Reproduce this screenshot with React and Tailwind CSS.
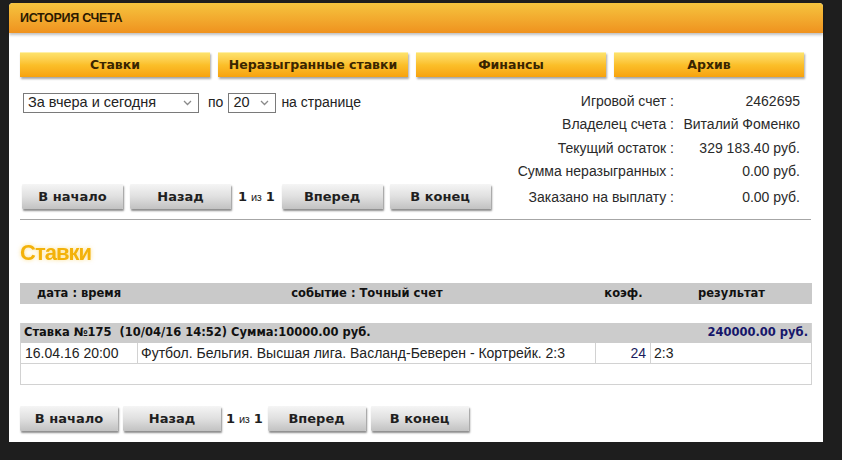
import React from 'react';

const bold = "font-['DejaVu_Sans',sans-serif] font-bold";
const regular = "font-['Liberation_Sans',Arial,sans-serif]";

const tabs = ['Ставки', 'Неразыгранные ставки', 'Финансы', 'Архив'];

const info = [
  ['Игровой счет :', '2462695'],
  ['Владелец счета :', 'Виталий Фоменко'],
  ['Текущий остаток :', '329 183.40 руб.'],
  ['Сумма неразыгранных :', '0.00 руб.'],
  ['Заказано на выплату :', '0.00 руб.'],
];

function GrayButton({ label, wide }) {
  return (
    <button
      className={`${bold} ${wide ? 'w-[101px]' : 'w-[98px]'} h-[25px] text-[13px] text-[#1f1f1f] bg-gradient-to-b from-[#f5f5f5] via-[#e0e0e0] to-[#c2c2c2] shadow-[1px_2px_2px_rgba(0,0,0,0.45)] rounded-[1px]`}
    >
      {label}
    </button>
  );
}

// pager used above and below the table, spacing differs a bit
function Pager({ wide }) {
  return (
    <div className={`flex items-center ${wide ? 'gap-[7px]' : 'gap-[5px]'}`}>
      <GrayButton label="В начало" wide={wide} />
      <GrayButton label="Назад" wide={wide} />
      <span className={`${bold} text-[13px] text-[#1f1f1f] tracking-[-0.3px]`}>
        1 <span className={`${regular} font-normal text-[11px]`}>из</span> 1
      </span>
      <GrayButton label="Вперед" wide={wide} />
      <GrayButton label="В конец" wide={wide} />
    </div>
  );
}

function Select({ value, width }) {
  return (
    <div className={`${width} h-[20px] border border-[#7a7a7a] bg-white flex items-center justify-between pl-[4px] pr-[6px]`}>
      <span className={`${regular} text-[14.5px] text-[#222] leading-none`}>{value}</span>
      <svg width="9" height="6" viewBox="0 0 9 6">
        <path d="M1 1l3.5 3.5L8 1" fill="none" stroke="#8a8a8a" strokeWidth="1.3" />
      </svg>
    </div>
  );
}

export default function App() {
  return (
    <div className="w-[842px] h-[460px] bg-[#1e1e1e] pt-[3px] pl-[9px] overflow-hidden">
      <div className="w-[814px] h-[439px] bg-white rounded-t-[4px] flex flex-col">
        {/* header bar */}
        <div className="shrink-0 h-[30px] rounded-t-[4px] bg-gradient-to-b from-[#f5c43e] to-[#ef921e] shadow-[0_2px_3px_rgba(0,0,0,0.25)] flex items-center pl-[11px]">
          <span className={`${regular} font-bold text-[12.5px] text-[#2a1900] tracking-[-0.3px]`}>ИСТОРИЯ СЧЕТА</span>
        </div>

        <div className="px-[11px] flex flex-col">
          {/* tabs */}
          <div className="mt-[19px] flex gap-[8px]">
            {tabs.map((t) => (
              <div
                key={t}
                className={`${bold} w-[190px] h-[25px] flex items-center justify-center text-[12.5px] text-[#3a2500] bg-gradient-to-b from-[#fde26a] via-[#fbbf29] to-[#f7a20c] border-t border-[#fff0a8] shadow-[1px_2px_2px_rgba(0,0,0,0.35)]`}
              >
                {t}
              </div>
            ))}
          </div>

          {/* filters + account info */}
          <div className="mt-[13px] flex justify-between">
            <div className="flex flex-col">
              <div className={`${regular} mt-[2px] ml-[3px] flex items-center text-[14px] text-[#222]`}>
                <Select value="За вчера и сегодня" width="w-[176px]" />
                <span className="ml-[9px] mr-[5px]">по</span>
                <Select value="20" width="w-[48px]" />
                <span className="ml-[5px]">на странице</span>
              </div>
              <div className="mt-[71px] ml-[2px]">
                <Pager wide />
              </div>
            </div>

            <div className={`${regular} mr-[12px] grid grid-cols-[auto_118px] gap-x-[8px] text-[14px] text-[#2a2a2a] text-right whitespace-nowrap`}>
              {info.map(([k, v], i) => (
                <React.Fragment key={k}>
                  <div className={`leading-[23px] ${i === 4 ? 'pt-[2px]' : ''}`}>{k}</div>
                  <div className={`leading-[23px] ${i === 4 ? 'pt-[2px]' : ''}`}>{v}</div>
                </React.Fragment>
              ))}
            </div>
          </div>

          <div className="mt-[10px] mr-[1px] border-t border-[#a6a6a6]" />

          <h2 className={`${regular} font-bold mt-[20px] text-[22px] leading-[26px] text-[#f3b20a] tracking-[-1px] drop-shadow-[0_0_2px_rgba(250,200,60,0.6)]`}>
            Ставки
          </h2>

          {/* column headings */}
          <div className={`${bold} mt-[17px] h-[21px] bg-[#c9c9c9] grid grid-cols-[118px_458px_55px_161px] items-center text-center text-[11.5px] text-[#111]`}>
            <div>дата : время</div>
            <div>событие : Точный счет</div>
            <div>коэф.</div>
            <div>результат</div>
          </div>

          {/* bet */}
          <div className="mt-[19px] border-x border-b border-[#d2d2d2]">
            <div className={`${bold} h-[20px] bg-[#cccccc] flex items-center justify-between pl-[3px] pr-[3px] text-[11.5px] text-[#111]`}>
              <span>Ставка №175&nbsp;&nbsp;(10/04/16 14:52) Сумма:10000.00 руб.</span>
              <span className="text-[#16166a]">240000.00 руб.</span>
            </div>
            <div className={`${regular} h-[21px] grid grid-cols-[117px_458px_55px_160px] text-[14px] text-[#222] border-b border-[#d2d2d2]`}>
              <div className="pl-[4px] flex items-center border-r border-[#d2d2d2]">16.04.16 20:00</div>
              <div className="pl-[3px] flex items-center border-r border-[#d2d2d2]">Футбол. Бельгия. Высшая лига. Васланд-Беверен - Кортрейк. 2:3</div>
              <div className="pr-[4px] flex items-center justify-end text-[#1c1c5e] border-r border-[#d2d2d2]">24</div>
              <div className="pl-[3px] flex items-center">2:3</div>
            </div>
            <div className="h-[20px]" />
          </div>

          <div className="mt-[21px]">
            <Pager />
          </div>
        </div>
      </div>
    </div>
  );
}
